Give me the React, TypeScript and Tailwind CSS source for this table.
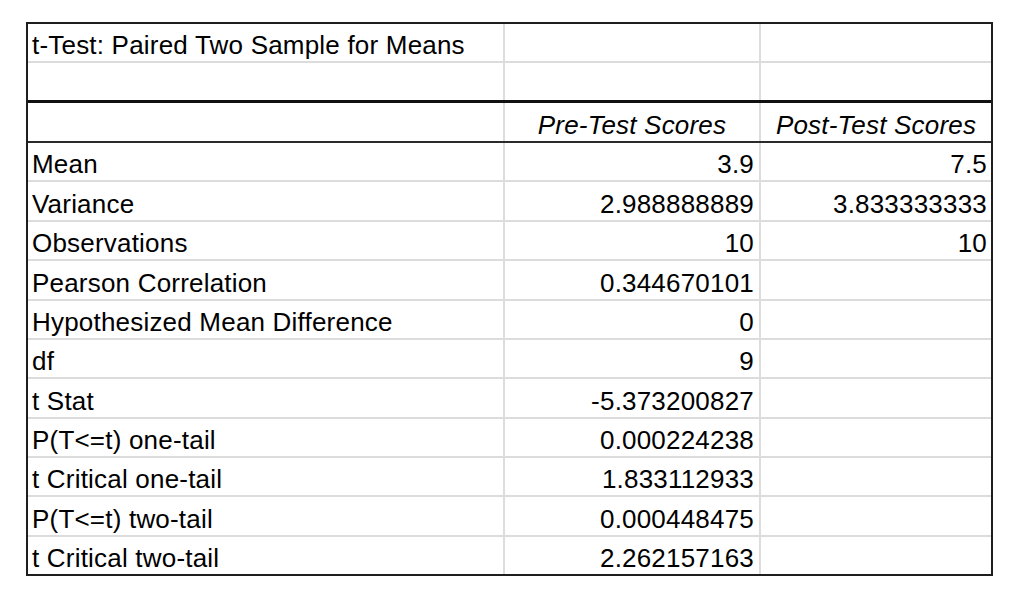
const rows: { label: string; pre: string; post: string }[] = [
  { label: "Mean", pre: "3.9", post: "7.5" },
  { label: "Variance", pre: "2.988888889", post: "3.833333333" },
  { label: "Observations", pre: "10", post: "10" },
  { label: "Pearson Correlation", pre: "0.344670101", post: "" },
  { label: "Hypothesized Mean Difference", pre: "0", post: "" },
  { label: "df", pre: "9", post: "" },
  { label: "t Stat", pre: "-5.373200827", post: "" },
  { label: "P(T<=t) one-tail", pre: "0.000224238", post: "" },
  { label: "t Critical one-tail", pre: "1.833112933", post: "" },
  { label: "P(T<=t) two-tail", pre: "0.000448475", post: "" },
  { label: "t Critical two-tail", pre: "2.262157163", post: "" },
];

// row heights measured off the sheet, border included
const bodyHeights = ["h-[39px]", "h-[40px]", "h-[39px]", "h-[40px]", "h-[39px]", "h-[39px]", "h-[40px]", "h-[39px]", "h-[39px]", "h-[40px]", "h-[37px]"];

const cell = "flex items-end pb-[3px] border-r-2 border-[#dcdcdc]";

const App = () => {
  return (
    <div className="w-[1024px] h-[602px] bg-white pt-[22px] pl-[26px]" style={{ fontFamily: '"Liberation Sans", Arial, sans-serif' }}>
      <div className="w-[967px] border-2 border-[#1e1e1e] text-[26px] tracking-[0.2px] text-black leading-none">
        {/* title */}
        <div className="flex h-[39px] border-b-2 border-[#dcdcdc]">
          <div className={`${cell} w-[477px] pl-[4px]`}>t-Test: Paired Two Sample for Means</div>
          <div className={`${cell} w-[256px]`} />
          <div className="w-[230px]" />
        </div>
        {/* blank row with thick rule */}
        <div className="flex h-[40px] border-b-[3px] border-[#111]">
          <div className={`${cell} w-[477px]`} />
          <div className={`${cell} w-[256px]`} />
          <div className="w-[230px]" />
        </div>
        {/* headers */}
        <div className="flex h-[40px] border-b-2 border-[#2a2a2a] italic">
          <div className={`${cell} w-[477px]`} />
          <div className={`${cell} w-[256px] justify-center`}>Pre-Test Scores</div>
          <div className="flex items-end justify-center pb-[3px] w-[230px]">Post-Test Scores</div>
        </div>
        {rows.map((r, i) => (
          <div
            key={r.label}
            className={`flex ${bodyHeights[i]} ${i < rows.length - 1 ? "border-b-2 border-[#dcdcdc]" : ""}`}
          >
            <div className={`${cell} w-[477px] pl-[4px]`}>{r.label}</div>
            <div className={`${cell} w-[256px] justify-end pr-[5px]`}>{r.pre}</div>
            <div className="flex items-end justify-end pb-[3px] pr-[4px] w-[230px]">{r.post}</div>
          </div>
        ))}
      </div>
    </div>
  );
};

export default App;
